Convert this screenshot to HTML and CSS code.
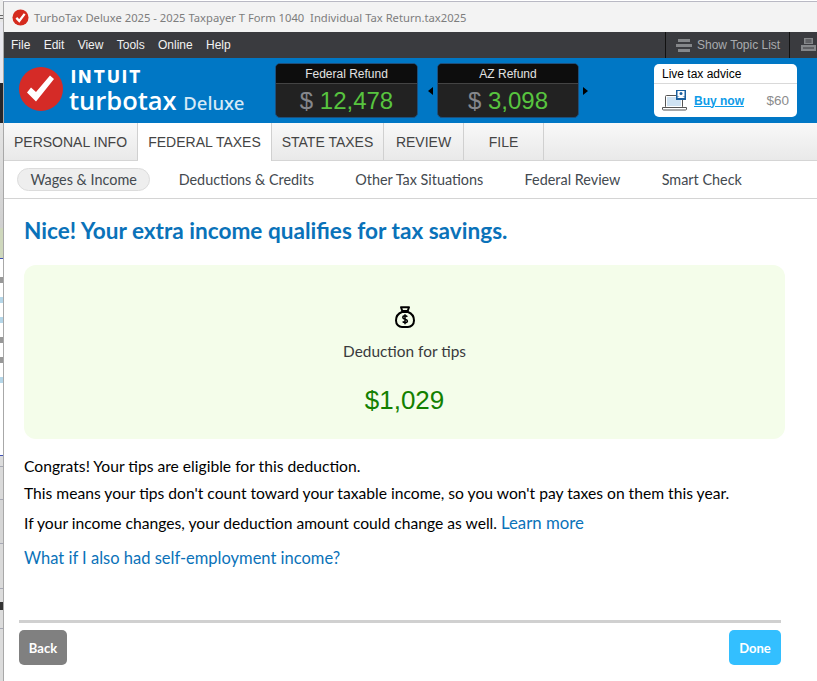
FILE: index.html
```html
<!DOCTYPE html>
<html lang="en">
<head>
<meta charset="utf-8">
<title>TurboTax Deluxe 2025</title>
<link rel="stylesheet" href="styles.css">
</head>
<body>
<div class="desktop">
  <div class="strip">
    <div class="s-a"></div><div class="s-menu"></div><div class="s-b"></div><div class="s-dark"></div><div class="s-c"></div><div class="s-green"></div>
    <div class="s-blue"></div>
    <div class="s-w1"></div><div class="s-bit"></div><div class="s-w2"></div><div class="s-teal"></div><div class="s-w2"></div><div class="s-teal"></div><div class="s-w2"></div><div class="s-bit"></div><div class="s-w2"></div><div class="s-bit"></div><div class="s-w2"></div><div class="s-teal"></div><div class="s-w3"></div>
    <div class="s-blue"></div>
    <div class="s-g1"></div><div class="s-line"></div><div class="s-g2"></div><div class="s-line"></div><div class="s-g3"></div><div class="s-line"></div><div class="s-g4"></div><div class="s-line"></div><div class="s-g5"></div><div class="s-dk"></div><div class="s-g6"></div><div class="s-line"></div><div class="s-g7"></div>
  </div>
  <div class="window">
    <div class="titlebar">
      <svg class="title-icon" viewBox="0 0 18 18"><circle cx="9" cy="9" r="8.500" fill="#d52b1e"/><path d="M4.600 9.400 7.700 12.600 13.400 5.200" fill="none" stroke="#fff" stroke-width="2.400"/></svg>
      <span class="title-text">TurboTax Deluxe 2025 - 2025 Taxpayer T Form 1040&nbsp; Individual Tax Return.tax2025</span>
    </div>
    <div class="menubar">
      <nav class="menu"><span>File</span><span>Edit</span><span>View</span><span>Tools</span><span>Online</span><span>Help</span></nav>
      <div class="menu-right">
        <div class="topic">
          <svg class="topic-icon" viewBox="0 0 16 15"><path d="M2 1h12v3H2zM0 6h16v3H0zM2 11h12v3H2z" fill="#85878a"/></svg>
          <span>Show Topic List</span>
        </div>
        <div class="print">
          <svg class="print-icon" viewBox="0 0 17 16"><path d="M4 1h9v6H4zM1 8h15v6H1z" fill="#85878a"/><path d="M5.500 3h6M5.500 5h6M3 11h11" stroke="#3a3b3f"/></svg>
        </div>
      </div>
    </div>
    <header class="brandbar">
      <div class="logo">
        <svg class="logo-mark" viewBox="0 0 44 44"><circle cx="22" cy="22" r="22" fill="#d52b27"/><path d="M8 25.500 17 34.500 35 12 31 8.500 17 25 12 20.500z" fill="#fff"/></svg>
        <div class="logo-text">
          <div class="intuit">INTUIT</div>
          <div class="turbo">turbotax <span class="deluxe">Deluxe</span></div>
        </div>
      </div>
      <div class="refunds">
        <div class="refund refund-fed">
          <div class="refund-label">Federal Refund</div>
          <div class="refund-value"><span class="dollar">$</span> 12,478</div>
        </div>
        <div class="arrows">
          <span class="arrow-l"></span>
          <div class="refund refund-az">
            <div class="refund-label">AZ Refund</div>
            <div class="refund-value"><span class="dollar">$</span> 3,098</div>
          </div>
          <span class="arrow-r"></span>
        </div>
      </div>
      <aside class="advice">
        <div class="advice-title">Live tax advice</div>
        <div class="advice-row">
          <svg class="advice-icon" viewBox="0 0 25 21"><rect x="3.500" y="5.500" width="17" height="12" rx="1" fill="#fff" stroke="#555"/><rect x="5" y="7" width="14" height="9" fill="#cfe2f2"/><path d="M.5 17.500h24v1.500a1 1 0 0 1-1 1h-22a1 1 0 0 1-1-1z" fill="#fff" stroke="#555"/><rect x="14" y="0" width="10" height="10" fill="#1a5f9e"/><rect x="15.500" y="1" width="7" height="5.500" fill="#fff"/><circle cx="19" cy="3.500" r="1.500" fill="#1a5f9e"/><path d="M15 8l4-3 4 3z" fill="#fff"/></svg>
          <a class="buy" href="#">Buy now</a>
          <span class="price">$60</span>
        </div>
      </aside>
    </header>
    <nav class="tabs">
      <span class="tab t-personal">PERSONAL INFO</span>
      <span class="tab tab-active t-federal">FEDERAL TAXES</span>
      <span class="tab t-state">STATE TAXES</span>
      <span class="tab t-review">REVIEW</span>
      <span class="tab t-file">FILE</span>
    </nav>
    <nav class="subnav">
      <span class="sub sub-active">Wages &amp; Income</span>
      <span class="sub">Deductions &amp; Credits</span>
      <span class="sub">Other Tax Situations</span>
      <span class="sub">Federal Review</span>
      <span class="sub">Smart Check</span>
    </nav>
    <main class="content">
      <h1 class="heading">Nice! Your extra income qualifies for tax savings.</h1>
      <section class="card">
        <svg class="bag" viewBox="0 0 20 22"><path d="M6 1.200h8l-1.300 3.800H7.300z" fill="none" stroke="#000" stroke-width="2" stroke-linejoin="round"/><path d="M7 6C3 7.500 1 11 1 14.500c0 4 3 6.500 6 6.500h6c3 0 6-2.500 6-6.500 0-3.500-2-7-6-8.500z" fill="none" stroke="#000" stroke-width="2"/><path d="M12.300 10.800c-.5-.7-1.300-1-2.300-1-1.200 0-2.200.6-2.200 1.700 0 2.200 4.600 1.100 4.600 3.400 0 1.100-1.100 1.700-2.400 1.700-1 0-1.800-.4-2.300-1.100M10 8.300v10" fill="none" stroke="#000" stroke-width="1.500"/></svg>
        <div class="card-label">Deduction for tips</div>
        <div class="card-amount">$1,029</div>
      </section>
      <p class="p1">Congrats! Your tips are eligible for this deduction.</p>
      <p class="p2">This means your tips don't count toward your taxable income, so you won't pay taxes on them this year.</p>
      <p class="p3">If your income changes, your deduction amount could change as well. <a class="link" href="#">Learn more</a></p>
      <p class="p4"><a class="link" href="#">What if I also had self-employment income?</a></p>
    </main>
    <footer class="footer">
      <div class="rule"></div>
      <div class="buttons">
        <button class="btn btn-back">Back</button>
        <button class="btn btn-done">Done</button>
      </div>
    </footer>
  </div>
</div>
</body>
</html>
```
FILE: styles.css
```css
* { box-sizing: border-box; }
html, body { margin: 0; padding: 0; height: 681px; overflow: hidden; background: #fff; }
body { font-family: "Liberation Sans", Arial, sans-serif; }
.desktop { display: flex; height: 681px; }

.strip { width: 3px; flex: none; display: flex; flex-direction: column; background: #d6d6d6; }
.s-a { height: 15px; background: #eeeeee; }
.s-menu { height: 7px; background: linear-gradient(#666 0 1px, #e6e6e6 1px 3px, #666 3px 4px, #e6e6e6 4px); }
.s-b { height: 61px; background: #e8e8ee; }
.s-dark { height: 40px; background: #26262a; }
.s-c { height: 105px; background: linear-gradient(#e4e4e4, #d0d0d0); }
.s-green { height: 30px; background: #cfd8bd; }
.s-blue { height: 1px; background: #3f51b5; }
.s-w1 { height: 18px; background: #fff; }
.s-w2 { height: 14px; background: #fff; }
.s-w3 { height: 72px; background: #fff; }
.s-bit { height: 6px; background: #999; }
.s-teal { height: 6px; background: #b5d6e8; }
.s-g1 { height: 10px; background: #dcdcdc; }
.s-line { height: 1px; background: #a6a8b4; }
.s-g2 { height: 32px; background: #dadada; }
.s-g3 { height: 43px; background: #d6d6d6; }
.s-g4 { height: 44px; background: #dadada; }
.s-g5 { height: 13px; background: #dcdcdc; }
.s-dk { height: 8px; background: #333; }
.s-g6 { height: 18px; background: #dcdcdc; }
.s-g7 { flex: 1; background: #dcdcdc; }

.window { flex: 1; min-width: 0; margin-top: 1px; border-left: 1px solid #a8a8a8; border-top: 1px solid #b9b9c4; display: flex; flex-direction: column; background: #fff; }

.titlebar { height: 30px; flex: none; background: #f3f3f3; display: flex; align-items: center; padding-left: 8px; gap: 5px; }
.title-icon { width: 17px; height: 17px; flex: none; }
.title-text { font-family: "Noto Sans", sans-serif; font-size: 11.230px; color: #7d7d7d; white-space: nowrap; }

.menubar { height: 26px; flex: none; background: #3a3b3f; display: flex; justify-content: space-between; }
.menu { display: flex; align-items: center; gap: 13.300px; padding-left: 7px; font-size: 12px; color: #f2f2f2; }
.menu-right { display: flex; height: 100%; }
.topic { width: 125px; border-left: 1px solid #111; border-right: 1px solid #111; display: flex; align-items: center; gap: 5px; padding-left: 10px; font-size: 12px; color: #a9abae; white-space: nowrap; }
.topic-icon { width: 16px; height: 15px; }
.print { width: 27px; display: flex; align-items: center; padding-left: 10px; }
.print-icon { width: 17px; height: 16px; flex: none; }

.brandbar { height: 65px; flex: none; background: #0077c5; display: flex; align-items: flex-start; padding-left: 15px; }
.logo { display: flex; width: 256px; padding-top: 9px; gap: 7px; color: #fff; }
.logo-mark { width: 44px; height: 44px; flex: none; }
.logo-text { padding-top: 1px; }
.intuit { font-family: "Inter", sans-serif; font-weight: 800; font-size: 17px; line-height: 18px; letter-spacing: 2.300px; padding-left: 1px; }
.turbo { font-family: "Open Sans", sans-serif; font-weight: 600; font-size: 25.500px; line-height: 28px; white-space: nowrap; margin-left: -1px; }
.deluxe { font-family: "Noto Sans", sans-serif; font-size: 18.500px; font-weight: 500; color: #d6e9f6; }

.refunds { display: flex; gap: 10px; padding-top: 5px; }
.arrows { display: flex; align-items: center; gap: 4px; height: 55px; }
.refund { width: 143px; height: 55px; border: 1px solid #1d4f7c; border-radius: 5px; background: #222; overflow: hidden; }
.refund-az { width: 142px; }
.refund-label { height: 20px; background: #0d0d0d; border-bottom: 1px solid #444; color: #e2e2e2; font-size: 12px; line-height: 20px; text-align: center; }
.refund-value { text-align: center; font-size: 24px; line-height: 34px; color: #58c43f; white-space: nowrap; }
.dollar { color: #85878c; }
.arrow-l { width: 0; height: 0; border: 4.500px solid transparent; border-left-width: 0; border-right: 5px solid #000; }
.arrow-r { width: 0; height: 0; border: 4.500px solid transparent; border-right-width: 0; border-left: 5px solid #000; }

.advice { width: 143px; height: 53px; margin: 6px 0 0 66px; background: #fff; border-radius: 5px; display: flex; flex-direction: column; }
.advice-title { height: 20px; border-bottom: 1px solid #d9d9d9; padding-left: 8px; font-size: 12px; line-height: 20px; color: #000; }
.advice-row { flex: 1; display: flex; align-items: center; padding: 0 8px; }
.advice-icon { width: 25px; height: 21px; flex: none; }
.buy { margin-left: 7px; font-size: 12px; font-weight: 700; color: #0d9be8; }
.price { margin-left: auto; font-size: 13.500px; color: #8c8c8c; }

.tabs { height: 38px; flex: none; display: flex; background: linear-gradient(#f8f8f8, #e9e9e9); border-bottom: 1px solid #d5d5d5; }
.tab { flex: none; display: flex; align-items: center; justify-content: center; height: 37px; border-right: 1px solid #d0d0d0; font-size: 14px; color: #444; white-space: nowrap; }
.tab-active { height: 38px; background: #fff; position: relative; z-index: 1; }
.t-personal { width: 134px; }
.t-federal { width: 134px; }
.t-state { width: 112px; }
.t-review { width: 80px; }
.t-file { width: 80px; }

.subnav { height: 38px; flex: none; display: flex; align-items: center; gap: 15.300px; padding-left: 13px; border-bottom: 1px solid #d4d4d4; font-family: "Lato", sans-serif; font-size: 14.400px; color: #444a50; }
.sub { padding: 0 13px; line-height: 21px; white-space: nowrap; }
.sub-active { background: #eeeeee; border: 1px solid #dcdcdc; border-radius: 12px; padding: 0 12.500px; }

.content { flex: none; height: 421px; padding: 0 32px 0 20px; font-family: "Lato", sans-serif; color: #000; }
.heading { margin: 17px 0 0; font-size: 22.600px; line-height: 30px; font-weight: 700; color: #0a72b9; white-space: nowrap; }
.card { margin-top: 19px; height: 174px; border-radius: 12px; background: #f4fdea; display: flex; flex-direction: column; align-items: center; padding-top: 41px; }
.bag { width: 20px; height: 22px; }
.card-label { margin-top: 13px; font-size: 15.400px; line-height: 20px; color: #393a3d; }
.card-amount { margin-top: 23px; font-family: "Liberation Sans", Arial, sans-serif; font-size: 26px; line-height: 32px; color: #138000; }
.content p { margin: 0; font-size: 15.650px; line-height: 20px; white-space: nowrap; }
.content .p1 { margin-top: 17px; }
.content .p2 { margin-top: 7px; }
.content .p3 { margin-top: 10px; }
.content .p4 { margin-top: 15px; font-size: 16.500px; }
.link { color: #0a72b9; text-decoration: none; }
.p3 .link { font-size: 16.800px; }

.footer { padding: 0 36px 0 15px; }
.rule { height: 3px; background: #d0d0d0; }
.buttons { margin-top: 7px; display: flex; justify-content: space-between; }
.btn { height: 35px; border: 0; border-radius: 5px; color: #fff; font-family: "Lato", sans-serif; font-size: 13px; font-weight: 700; padding: 0; }
.btn-back { width: 48px; background: #808080; }
.btn-done { width: 52px; background: #33bfff; }
```
